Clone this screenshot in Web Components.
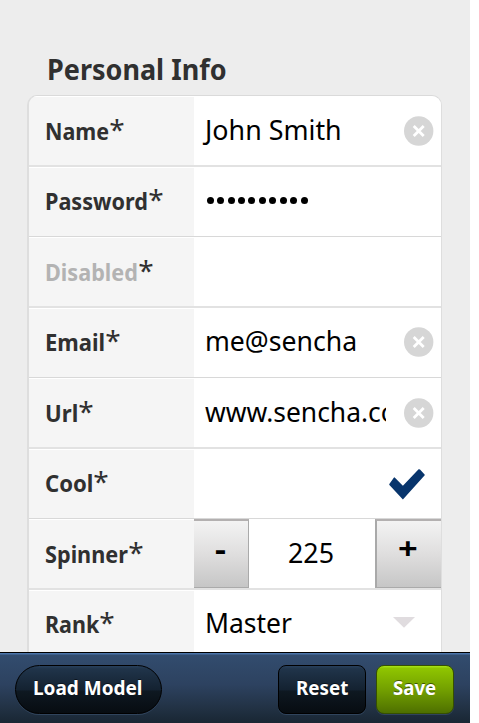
<!DOCTYPE html>
<html lang="en">
<head>
<meta charset="utf-8">
<title>Personal Info</title>
<style>body{margin:0;background:#fff;font-family:"Noto Sans","Open Sans",sans-serif;overflow:hidden}</style>
</head>
<body>
<info-screen></info-screen>
<script>
const define = (name, html, setup) => customElements.define(name, class extends HTMLElement {
  constructor() {
    super();
    const t = document.createElement('template');
    t.innerHTML = html;
    this.attachShadow({mode: 'open'}).append(t.content.cloneNode(true));
  }
  connectedCallback() { if (setup) setup(this, this.shadowRoot); }
});

// Text condensed or expanded to a given advance width.
define('fit-text', `<style>
:host{display:block;white-space:pre;flex:none}
span{display:inline-block;transform-origin:0 50%}
</style><span><slot></slot></span>`, (el, root) => {
  const w = +el.getAttribute('w'), s = root.querySelector('span');
  el.style.width = w + 'px';
  s.style.transform = `scaleX(${w / s.offsetWidth})`;
});

define('clear-icon', `<style>:host{display:block;width:30px;height:30px;margin-left:auto;margin-right:7px}svg{display:block}</style>
<svg width="30" height="30" viewBox="0 0 30 30"><circle cx="14.7" cy="15" r="14.7" fill="#d6d6d6"/><path d="M10 10.3 19.4 19.7M19.4 10.3 10 19.7" stroke="#fff" stroke-width="3.3" stroke-linecap="square" transform="translate(2.2 2.25) scale(.85)"/></svg>`);

define('check-icon', `<style>:host{display:block;margin-left:auto;margin-right:16px;margin-top:1px}svg{display:block}</style>
<svg width="36" height="31" viewBox="0 0 36 31"><path d="M5.7 8.4 13.9 16.8 29.6.3Q30.2-.1 31 .5L35.6 5.4Q36 6 35.5 6.6L13.9 30.5.4 16.1Q0 15.5.5 14.8L4.8 8.7Q5.2 8.1 5.7 8.4Z" fill="#08356c"/></svg>`);

define('arrow-icon', `<style>:host{display:block;margin-left:auto;margin-right:26px;margin-top:-4px}svg{display:block}</style>
<svg width="22" height="11" viewBox="0 0 22 11"><path d="M0 0H22L11 10.7Z" fill="#e0dcdf"/></svg>`);

define('form-row', `<style>
:host{display:grid;grid-template-columns:165px 1fr;box-sizing:border-box;height:70px;border-bottom:1px solid #d8d8d8}
:host([thick]){height:71px;border-bottom:2px solid #e2e2e2}
.label{display:flex;align-items:center;background:#f5f5f5;border-top:1px solid #fff;padding-left:16px;padding-bottom:3px;color:#303030;font-size:23.5px;line-height:32px;font-weight:700;box-sizing:border-box}
:host([thick]:not([last])) .label{padding-bottom:1px}
:host([disabled]) fit-text{color:#b3b3b3}
i{font-style:normal;font-weight:400;font-size:28px;line-height:32px;margin:-4px 0 0 .2px}
.field{display:flex;align-items:center;background:#fff;min-width:0;overflow:hidden;padding-left:11px;font-size:28px;line-height:38px;color:#000}
:host([flush]) .field{padding-left:0;align-items:stretch}
::slotted(.value){margin-top:-4px}
::slotted(.up){margin-top:-6px}
</style><div class="label"><fit-text></fit-text><i>*</i></div><div class="field"><slot></slot></div>`, (el, root) => {
  const old = root.querySelector('fit-text'), f = document.createElement('fit-text');
  f.setAttribute('w', el.getAttribute('w'));
  f.textContent = el.getAttribute('label');
  old.replaceWith(f);
});

define('password-dots', `<style>:host{display:flex;gap:3.45px;margin:-3px 0 0 1.7px}b{width:7px;height:7px;border-radius:50%;background:#000}</style>`,
  (el, root) => { for (let i = 0; i < 10; i++) root.append(document.createElement('b')); });

define('number-spinner', `<style>
:host{display:grid;grid-template-columns:55px 126px 1fr;width:100%}
div{display:flex;justify-content:center}
.b{box-sizing:border-box;border:1px solid #aaa;border-top:2px solid #b3b0b0;background:linear-gradient(#f3f3f3,#dfdede 50%,#c6c6c6);font-weight:700;font-size:31px;line-height:54px}
.minus{border-left:0;padding-right:2px}.plus{border-left:2px solid #a9a9a9;border-right:0;line-height:53px;padding-right:3px}
.v{align-items:center;background:#fff;padding:0 3px 3px 0;box-sizing:border-box}
</style><div class="b minus"><fit-text w="11">-</fit-text></div><div class="v"><fit-text w="46">225</fit-text></div><div class="b plus"><fit-text w="20">+</fit-text></div>`);

define('tool-button', `<style>
:host{display:flex;justify-content:center;box-sizing:border-box;height:49px;width:var(--w);border:1px solid #000;border-radius:8px;background:linear-gradient(#28405c 0,#20344a 6%,#142231 50%,#0e1821 54%,#070c11);box-shadow:0 1px 0 #30445c;color:#fff;font-weight:700;font-size:19.5px;line-height:43px;text-shadow:0 -1px 0 rgba(0,0,0,.5)}
:host([round]){border-radius:24.5px;padding-right:2px}
:host([confirm]){border-color:#365000;padding-right:1px;background:linear-gradient(#a9e51a 0,#8fc500 5%,#73a000 50%,#4e7000)}
</style><slot></slot>`);

define('info-screen', `<style>
:host{display:flex;flex-direction:column;width:470px;height:723px;background:#ededed;overflow:hidden}
main{flex:1;min-height:0;overflow:hidden;padding:50px 28px 0 27px}
h1{margin:0;padding-left:20px;height:45px;line-height:38px;font-size:28.5px;color:#303030}
.card{border:1px solid #dadada;border-left:2px solid #dedede;border-right:1px solid #dedede;border-bottom:0;border-radius:10px 10px 0 0;overflow:hidden}
.clip{width:181px;overflow:hidden}
footer{flex:none;box-sizing:border-box;height:71px;border-top:1px solid #000;display:flex;align-items:flex-start;padding:12px 16px 0 15px;background:linear-gradient(#4a74aa 0,#4a74aa 1px,#324c6e 2px,#2d4260 45%,#213143 80%,#192633)}
.s{flex:1}
</style>
<main><h1><fit-text w="180">Personal Info</fit-text></h1>
<div class="card">
<form-row thick label="Name" w="64"><fit-text class="value" w="137">John Smith</fit-text><clear-icon></clear-icon></form-row>
<form-row label="Password" w="103"><password-dots></password-dots></form-row>
<form-row thick disabled label="Disabled" w="93"></form-row>
<form-row label="Email" w="60"><fit-text class="value up" w="152">me@sencha</fit-text><clear-icon style="margin-top:-2px"></clear-icon></form-row>
<form-row thick label="Url" w="33"><div class="clip value"><fit-text w="216">www.sencha.com</fit-text></div><clear-icon></clear-icon></form-row>
<form-row label="Cool" w="48"><check-icon></check-icon></form-row>
<form-row thick flush label="Spinner" w="83"><number-spinner></number-spinner></form-row>
<form-row thick last label="Rank" w="54"><fit-text class="value up" w="87">Master</fit-text><arrow-icon></arrow-icon></form-row>
</div></main>
<footer><tool-button round style="--w:147px"><fit-text w="110">Load Model</fit-text></tool-button><span class="s"></span>
<tool-button style="--w:88px;margin-right:10px"><fit-text w="52">Reset</fit-text></tool-button>
<tool-button confirm style="--w:78px"><fit-text w="43">Save</fit-text></tool-button></footer>`);
</script>
</body>
</html>
